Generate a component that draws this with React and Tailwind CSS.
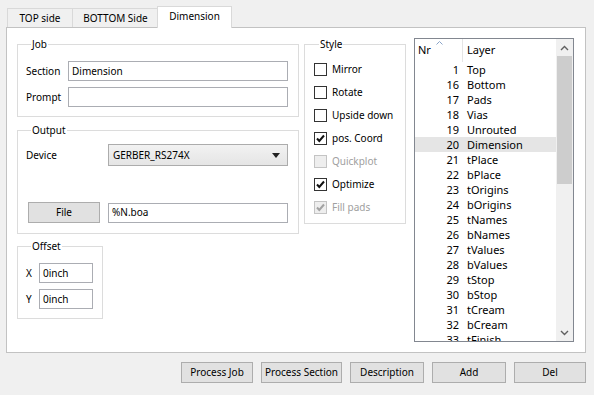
import React from 'react';

const layers = [
  [1, 'Top'], [16, 'Bottom'], [17, 'Pads'], [18, 'Vias'], [19, 'Unrouted'],
  [20, 'Dimension'], [21, 'tPlace'], [22, 'bPlace'], [23, 'tOrigins'],
  [24, 'bOrigins'], [25, 'tNames'], [26, 'bNames'], [27, 'tValues'],
  [28, 'bValues'], [29, 'tStop'], [30, 'bStop'], [31, 'tCream'],
  [32, 'bCream'], [33, 'tFinish'],
];

const styleOpts = [
  { label: 'Mirror', checked: false },
  { label: 'Rotate', checked: false },
  { label: 'Upside down', checked: false },
  { label: 'pos. Coord', checked: true },
  { label: 'Quickplot', checked: false, disabled: true },
  { label: 'Optimize', checked: true },
  { label: 'Fill pads', checked: true, disabled: true },
];

const Check = ({ checked, disabled }) => (
  <span
    className={
      'w-[13px] h-[13px] border flex items-center justify-center shrink-0 ' +
      (disabled ? 'border-[#c4c4c4] bg-[#eeeeee]' : 'border-[#333333] bg-white')
    }
  >
    {checked && (
      <svg width="11" height="11" viewBox="0 0 11 11">
        <path
          d="M2 5.5 L4.3 8 L9 2.5"
          fill="none"
          stroke={disabled ? '#a3a3a3' : '#111111'}
          strokeWidth="2"
        />
      </svg>
    )}
  </span>
);

const Group = ({ title, className, children }) => (
  <fieldset className={'border border-[#dcdcdc] ' + className}>
    <legend className="ml-[5px] px-px leading-[14px]">{title}</legend>
    {children}
  </fieldset>
);

const Input = ({ value, className }) => (
  <div className={'h-[20px] border border-[#abadb3] bg-white flex items-center px-[3px] ' + className}>
    {value}
  </div>
);

const Button = ({ children, className }) => (
  <button className={'h-[21px] border border-[#adadad] bg-[#e1e1e1] flex items-center justify-center ' + className}>
    {children}
  </button>
);

const Chevron = ({ up }) => (
  <svg width="9" height="6" viewBox="0 0 9 6">
    <path
      d={up ? 'M1 5 L4.5 1.5 L8 5' : 'M1 1 L4.5 4.5 L8 1'}
      fill="none"
      stroke="#606060"
      strokeWidth="1.4"
    />
  </svg>
);

export default function App() {
  return (
    <div
      className="w-[594px] h-[395px] bg-[#f0f0f0] pt-[6px] pl-[6px] pr-[8px] text-[10px] text-black overflow-hidden"
      style={{ fontFamily: '"Noto Sans", "Open Sans", sans-serif' }}
    >
      {/* tabs */}
      <div className="flex items-end h-[21px] pl-px">
        <div className="h-[19px] w-[66px] border border-b-0 border-[#d9d9d9] bg-[#f0f0f0] flex items-center justify-center">
          TOP side
        </div>
        <div className="h-[19px] w-[87px] -ml-px border border-b-0 border-[#d9d9d9] bg-[#f0f0f0] flex items-center justify-center">
          BOTTOM Side
        </div>
        <div className="relative z-10 h-[22px] w-[75px] -ml-[2px] -mb-px border border-b-0 border-[#d9d9d9] bg-white flex items-center justify-center pb-[2px]">
          Dimension
        </div>
      </div>

      {/* panel */}
      <div className="w-[580px] h-[326px] border border-[#c2c2c2] bg-white pl-[10px] pt-[9px] flex items-start">
        {/* left column */}
        <div className="w-[281px] flex flex-col">
          <Group title="Job" className="pl-[8px] pr-[10px] pb-[9px]">
            <div className="mt-[10px] flex flex-col gap-[6px]">
              <div className="flex items-center">
                <span className="w-[42px]">Section</span>
                <Input value="Dimension" className="w-[220px]" />
              </div>
              <div className="flex items-center">
                <span className="w-[42px]">Prompt</span>
                <Input value="" className="w-[220px]" />
              </div>
            </div>
          </Group>

          <Group title="Output" className="mt-[6px] pl-[8px] pr-[10px] pb-[10px]">
            <div className="mt-[7px] flex items-center">
              <span className="w-[82px]">Device</span>
              <div className="w-[180px] h-[22px] border border-[#acacac] bg-gradient-to-b from-[#f2f2f2] to-[#e5e5e5] flex items-center justify-between pl-[4px] pr-[7px]">
                <span>GERBER_RS274X</span>
                <svg width="8" height="5" viewBox="0 0 8 5">
                  <path d="M0 0 H8 L4 5 Z" fill="#222222" />
                </svg>
              </div>
            </div>
            <div className="mt-[36px] flex items-center">
              <Button className="ml-[2px] w-[72px] h-[20px]">File</Button>
              <Input value="%N.boa" className="ml-[8px] w-[180px]" />
            </div>
          </Group>

          <Group title="Offset" className="mt-[5px] w-[86px] pl-[8px] pb-[9px]">
            <div className="mt-[10px] flex flex-col gap-[6px]">
              <div className="flex items-center">
                <span className="w-[13px]">X</span>
                <Input value="0inch" className="w-[54px]" />
              </div>
              <div className="flex items-center">
                <span className="w-[13px]">Y</span>
                <Input value="0inch" className="w-[54px]" />
              </div>
            </div>
          </Group>
        </div>

        {/* style */}
        <Group title="Style" className="ml-[6px] w-[102px] pl-[9px] pb-[4px]">
          <div className="mt-[7px] flex flex-col">
            {styleOpts.map((o) => (
              <div key={o.label} className="h-[23px] flex items-center gap-[5px]">
                <Check checked={o.checked} disabled={o.disabled} />
                <span className={o.disabled ? 'text-[#a0a0a0]' : ''}>{o.label}</span>
              </div>
            ))}
          </div>
        </Group>

        {/* layer list */}
        <div className="ml-[8px] mt-[1px] w-[160px] h-[304px] border border-[#828790] bg-white flex text-[11px]">
          <div className="flex-1 flex flex-col overflow-hidden">
            <div className="h-[23px] flex items-center shrink-0">
              <div className="w-[48px] h-full relative flex items-center pl-[3px] border-r border-[#e5e5e5]">
                Nr
                <svg className="absolute left-[21px] top-[2px]" width="7" height="4" viewBox="0 0 7 4">
                  <path d="M0.5 3.5 L3.5 0.5 L6.5 3.5" fill="none" stroke="#8aa4c8" strokeWidth="1" />
                </svg>
              </div>
              <span className="pl-[4px]">Layer</span>
            </div>
            {layers.map(([nr, name]) => (
              <div
                key={nr}
                className={'h-[15px] leading-[15px] flex shrink-0 ' + (nr === 20 ? 'bg-[#e5e5e5]' : '')}
              >
                <span className="w-[44px] text-right">{nr}</span>
                <span className="pl-[8px]">{name}</span>
              </div>
            ))}
          </div>
          <div className="w-[17px] bg-[#f0f0f0] flex flex-col shrink-0">
            <div className="h-[17px] flex items-center justify-center">
              <Chevron up />
            </div>
            <div className="flex-1 px-px">
              <div className="h-[128px] bg-[#cdcdcd]" />
            </div>
            <div className="h-[17px] flex items-center justify-center">
              <Chevron />
            </div>
          </div>
        </div>
      </div>

      {/* bottom buttons */}
      <div className="mt-[9px] flex justify-end gap-[8px]">
        <Button className="w-[72px]">Process Job</Button>
        <Button className="w-[81px]">Process Section</Button>
        <Button className="w-[74px]">Description</Button>
        <Button className="w-[74px]">Add</Button>
        <Button className="w-[72px]">Del</Button>
      </div>
    </div>
  );
}
